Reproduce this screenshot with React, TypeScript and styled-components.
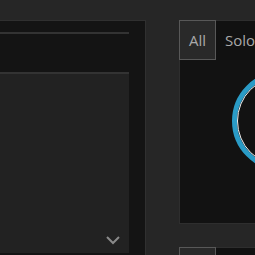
import React from "react";
import styled, { createGlobalStyle } from "styled-components";

const Global = createGlobalStyle`
  html, body { margin: 0; padding: 0; background: #262626; overflow: hidden; }
  body { font-family: "Open Sans", "Noto Sans", sans-serif; }
  #root { width: 255px; height: 255px; overflow: hidden; }
`;

const Page = styled.div`
  display: flex;
  align-items: flex-start;
  gap: 33px;
  padding-top: 20px;
  width: 400px;
  height: 255px;
  box-sizing: border-box;
`;

const LeftPanel = styled.section`
  width: 146px;
  height: 260px;
  box-sizing: border-box;
  background: #141414;
  border-top: 1px solid #303030;
  border-right: 1px solid #303030;
  padding: 11px 16px 0 0;
  display: flex;
  flex-direction: column;
  flex-shrink: 0;
`;

const Rule = styled.div`
  height: 2px;
  background: #333333;
`;

const Editor = styled.div`
  margin-top: 38px;
  height: 181px;
  box-sizing: border-box;
  background: #222222;
  border-top: 2px solid #333333;
  display: flex;
  align-items: flex-end;
  justify-content: flex-end;
  padding: 0 8px 8px 0;
`;

const RightColumn = styled.div`
  width: 140px;
  flex-shrink: 0;
  display: flex;
  flex-direction: column;
  gap: 23px;
`;

const Widget = styled.div`
  display: flex;
  flex-direction: column;
`;

const TabStrip = styled.div`
  display: flex;
  height: 40px;
  box-sizing: border-box;
  background: #111111;
  border-top: 1px solid #2e2e2e;
`;

const Tab = styled.div<{ $active?: boolean }>`
  box-sizing: border-box;
  height: ${(p) => (p.$active ? "40px" : "39px")};
  margin-top: ${(p) => (p.$active ? "-1px" : "0")};
  padding: 0 9px;
  line-height: 38px;
  font-size: 15px;
  color: #a9a9a9;
  white-space: nowrap;
  background: ${(p) => (p.$active ? "#292929" : "transparent")};
  border: ${(p) => (p.$active ? "1px solid #585858" : "none")};
`;

const TabPanel = styled.div`
  height: 164px;
  box-sizing: border-box;
  background: #121212;
  border-left: 1px solid #2e2e2e;
  border-bottom: 1px solid #2e2e2e;
  padding: 11px 0 0 52px;
`;

const Chevron = () => (
  <svg width="16" height="10" viewBox="0 0 16 10">
    <path d="M2 2 L8 8 L14 2" fill="none" stroke="#8a8a8a" strokeWidth="2" />
  </svg>
);

const Ring = () => (
  <svg width="100" height="100" viewBox="0 0 100 100">
    <circle cx="50" cy="50" r="47.5" fill="none" stroke="#2a9bc6" strokeWidth="5" />
    <circle cx="50" cy="50" r="44.5" fill="none" stroke="#f2f2f2" strokeWidth="1" />
  </svg>
);

const Tabs = () => (
  <TabStrip>
    <Tab $active>All</Tab>
    <Tab>Solos</Tab>
  </TabStrip>
);

export default function App() {
  return (
    <>
      <Global />
      <Page>
        <LeftPanel>
          <Rule />
          <Editor>
            <Chevron />
          </Editor>
        </LeftPanel>
        <RightColumn>
          <Widget>
            <Tabs />
            <TabPanel>
              <Ring />
            </TabPanel>
          </Widget>
          <Widget>
            <Tabs />
          </Widget>
        </RightColumn>
      </Page>
    </>
  );
}
